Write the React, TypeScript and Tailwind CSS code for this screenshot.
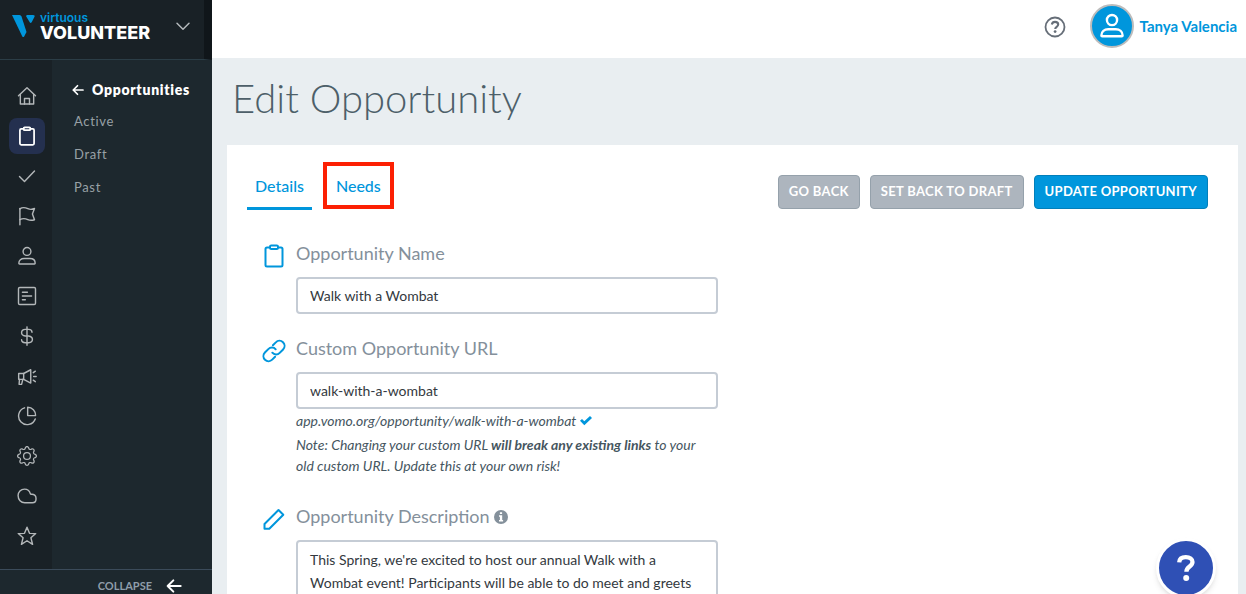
import type { ReactNode } from "react";
import { clsx } from "clsx";
import { BsGear } from "react-icons/bs";

type IconProps = { className?: string; children: ReactNode; width?: number };

function Icon({ className, children, width = 1.7 }: IconProps) {
  return (
    <svg
      viewBox="0 0 24 24"
      fill="none"
      stroke="currentColor"
      strokeWidth={width}
      strokeLinecap="round"
      strokeLinejoin="round"
      aria-hidden="true"
      className={clsx("shrink-0", className)}
    >
      {children}
    </svg>
  );
}

const home = (
  <>
    <path d="M1.8 11.8 12 2l10.200 9.800" />
    <path d="M4 10v11.500h16V10" />
    <path d="M9 21.500V15h6v6.500" />
  </>
);
const clipboard = (
  <>
    <path d="M8 3.500H5A1.500 1.500 0 0 0 3.500 5v16A1.500 1.500 0 0 0 5 22.500h14a1.500 1.500 0 0 0 1.500-1.500V5A1.500 1.500 0 0 0 19 3.500h-3" />
    <path d="M9.200 1.500h5.600a1.200 1.200 0 0 1 1.200 1.200v1.100a1.200 1.200 0 0 1-1.200 1.200H9.200A1.200 1.200 0 0 1 8 3.800V2.700a1.200 1.200 0 0 1 1.200-1.200Z" />
  </>
);
const check = <path d="m3 12.500 6 6L21 6" />;
const flag = (
  <>
    <path d="M3.500 22.500V3" />
    <path d="M3.500 3.500C7 .8 10.500 2 13 3.200s5 1.300 8-.2l-2.500 6.500L21 16.500c-3 1-5.500 1-8-.2s-6-1.800-9.500 0" />
  </>
);
const person = (
  <>
    <circle cx="12" cy="6.500" r="4.700" />
    <path d="M3 21.500h18c.5 0 .8-.3.8-.8 0-3.700-2.800-5.700-6.300-5.700h-7C5 15 2.200 17 2.200 20.700c0 .5.3.8.8.8Z" />
  </>
);
const article = (
  <>
    <rect x="1.800" y="1.800" width="20.400" height="20.400" rx="1.500" />
    <path d="M6.500 7.500h6M6.500 12h11M6.500 16.500h3.500" />
  </>
);
const dollar = (
  <>
    <path d="M12 1v22" />
    <path d="M18 7.500C18 5.300 16.300 4 14 4h-4C7.500 4 5.500 5.500 5.500 8s2 3.500 4.500 4h4c2.500.5 4.500 1.500 4.500 4S16.500 20 14 20h-4c-2.500 0-4.500-1.300-4.500-3.500" />
  </>
);
const megaphone = (
  <>
    <path d="M2 9h6v7H2Z" />
    <path d="m8 9 8.500-4.500v16L8 16" />
    <path d="m3 16-.5 6h3L7 16" />
    <path d="m19.500 8 2.500-1.800M20 12.500h3M19.500 17l2.500 1.800" />
  </>
);
const pie = (
  <>
    <path d="M9 2.200A10.300 10.300 0 1 0 21.900 15.500" />
    <path d="M12.800 1.500A9.500 9.500 0 0 1 22.300 11.500h-9.500Z" />
  </>
);
const cloud = (
  <path d="M16 9.200C15 5.700 12.300 3.700 9 3.700c-4.400 0-7.700 3.300-7.700 7.800 0 5 3.500 8.500 8 8.500h9.200c2.500 0 4.300-1.800 4.300-4.200v-1.300c0-3-2.500-4.800-5.300-4.600-.8.100-1.300-.1-1.500-.7Z" />
);
const star = <path d="m12 1.500 3 7.300 7.500.3-5.800 5 2 7.900L12 17.700 5.300 22l2-7.900-5.800-5 7.500-.3Z" />;
const backArrow = <path d="M22 12H2.500M11 3.500 2.500 12l8.500 8.500" />;
const link = (
  <>
    <path d="M10.300 13.700a5 5 0 0 0 7.400.2l3.400-3.400a5 5 0 0 0-7.300-7.100l-2.900 2.800" />
    <path d="M13.700 10.300a5 5 0 0 0-7.400-.2l-3.400 3.400a5 5 0 0 0 7.300 7.100l2.900-2.800" />
  </>
);
const pencil = <path d="M2.500 17 16.500 3l4.800 4.800L7.300 21.800H2.500Z" />;

const navItems = [
  { label: "Home", icon: home },
  { label: "Opportunities", icon: clipboard, active: true },
  { label: "Approvals", icon: check },
  { label: "Campaigns", icon: flag },
  { label: "People", icon: person },
  { label: "Forms", icon: article },
  { label: "Giving", icon: dollar },
  { label: "Announcements", icon: megaphone },
  { label: "Reports", icon: pie },
  { label: "Settings", icon: null },
  { label: "Cloud", icon: cloud },
  { label: "Favorites", icon: star },
];

function Sidebar() {
  return (
    <aside className="flex w-[212px] shrink-0 flex-col bg-[#1d282e]">
      <div className="flex h-[60px] shrink-0 items-start border-b border-[#2b3d46] border-r-8 border-r-[#10161a] bg-[#192126] pl-3">
        <svg viewBox="0 0 24 24" className="mt-[14px] h-6 w-6 shrink-0" aria-hidden="true">
          <path d="M0 1h7.500q1.500 0 2 1.500L14.500 18l-2.200 4.200q-1 1.600-2 .2Z" fill="#0096dc" />
          <path d="M15 1h6q2.400 0 1.400 2l-2.600 5q-1.500 2-2.500-.5L14.200 2.500Q14 1 15 1Z" fill="#0096dc" />
        </svg>
        <div className="ml-1 mt-[11px] flex flex-col font-['Inter',sans-serif]">
          <span className="text-[12px] font-semibold leading-[13px] text-[#0096dc]">virtuous</span>
          <span className="text-[18px] font-extrabold leading-[17px] text-white">VOLUNTEER</span>
        </div>
        <button type="button" aria-label="Switch product" className="ml-auto mt-[18px] mr-[13px] text-[#b5babd]">
          <Icon className="h-4 w-4" width={2.2}>
            <path d="m3 8 9 9 9-9" />
          </Icon>
        </button>
      </div>

      <div className="flex min-h-0 flex-1 overflow-hidden">
        <nav aria-label="Main" className="flex w-[52px] shrink-0 flex-col items-center gap-1 bg-[#192126] pt-[18px]">
          {navItems.map((item) => (
            <a
              key={item.label}
              href="#"
              aria-label={item.label}
              className={clsx(
                "flex h-9 w-9 shrink-0 items-center justify-center rounded-lg ml-[2px]",
                item.active ? "bg-[#24304f] text-white" : "text-[#b3b7b9]",
              )}
            >
              {item.icon ? (
                <Icon className="h-5 w-5" width={item.active ? 2.1 : 1.7}>
                  {item.icon}
                </Icon>
              ) : (
                <BsGear className="h-5 w-5" aria-hidden="true" />
              )}
            </a>
          ))}
        </nav>
        <nav aria-label="Opportunities" className="flex flex-1 flex-col pl-5 pt-[19px]">
          <a href="#" className="flex h-5 items-center gap-2 text-[14px] font-extrabold tracking-wider text-white">
            <Icon className="mt-[2px] h-3 w-3" width={3.4}>
              {backArrow}
            </Icon>
            Opportunities
          </a>
          <ul className="mt-3 flex flex-col gap-[13px] pl-[2px] text-[13px] leading-5 tracking-wider text-[#98a1a6]">
            {["Active", "Draft", "Past"].map((name) => (
              <li key={name}>
                <a href="#">{name}</a>
              </li>
            ))}
          </ul>
        </nav>
      </div>

      <button
        type="button"
        className="flex shrink-0 items-center justify-end gap-[14px] border-t border-[#3b4b5a] pr-[30px] pt-2 text-[11px] font-bold leading-4 text-[#8f9daa]"
      >
        COLLAPSE
        <Icon className="h-4 w-4 text-white" width={3}>
          {backArrow}
        </Icon>
      </button>
    </aside>
  );
}

function TopBar() {
  return (
    <header className="flex h-[58px] shrink-0 items-start justify-end bg-white pr-[9px] pt-1">
      <button type="button" aria-label="Help" className="mt-3 mr-6 text-[#666e78]">
        <svg viewBox="0 0 22 22" className="h-[22px] w-[22px]" fill="none" stroke="currentColor" aria-hidden="true">
          <circle cx="11" cy="11" r="9.500" strokeWidth="1.800" />
          <path d="M7.800 8.500C8.200 6.700 9.400 5.900 11 5.900c1.900 0 3.200 1.100 3.200 2.700 0 2.200-3 2.300-3 4.300" strokeWidth="2.100" />
          <circle cx="11.100" cy="15.600" r="1.400" fill="currentColor" stroke="none" />
        </svg>
      </button>
      <a href="#" className="flex items-center gap-[6px] text-[15px] font-bold text-[#0096dc]">
        <span className="flex h-11 w-11 items-center justify-center rounded-full border-2 border-[#bcbcbc] bg-[#0096dc] text-white">
          <Icon className="h-[26px] w-[26px]" width={2.2}>
            {person}
          </Icon>
        </span>
        Tanya Valencia
      </a>
    </header>
  );
}

const buttonBase = "h-[34px] rounded border px-[10px] text-[13px] font-bold tracking-wide";
const inputBase = "w-full rounded border-2 border-[#c5ccd5] bg-white px-3 text-[14px] text-[#333940] outline-none";

type FieldProps = { id: string; label: ReactNode; icon: ReactNode; children: ReactNode };

function Field({ id, label, icon, children }: FieldProps) {
  return (
    <div className="flex gap-[10px]">
      <Icon className="mt-[3px] h-6 w-6 text-[#0096dc]" width={2}>
        {icon}
      </Icon>
      <div className="w-full max-w-[422px]">
        <label htmlFor={id} className="mb-3 flex h-6 items-center gap-1 text-[18px] text-[#84909b]">
          {label}
        </label>
        {children}
      </div>
    </div>
  );
}

export default function App() {
  return (
    <div className="relative flex h-screen overflow-hidden bg-[#e9eef1] font-['Lato',sans-serif]">
      <Sidebar />
      <div className="flex min-w-0 flex-1 flex-col">
        <TopBar />
        <main className="flex-1 overflow-y-auto pl-[15px] pr-2 [scrollbar-width:none]">
          <h1 className="pb-[17px] pl-[5px] pt-[15px] text-[40px] font-light leading-[50px] text-[#4d5f69]">
            Edit Opportunity
          </h1>
          <section className="mt-[5px] bg-white pb-10">
            <div className="flex items-start justify-between pl-5 pr-[30px] pt-[17px]">
              <nav aria-label="Sections" className="flex gap-[11px] text-[16px] font-medium text-[#0096dc]">
                <a href="#details" className="flex h-12 items-center border-b-3 px-2 pt-[3px] border-[#0096dc]">
                  Details
                </a>
                <a href="#needs" className="flex h-[47px] items-center border-4 border-[#fc2003] px-[9px]">
                  Needs
                </a>
              </nav>
              <div className="flex gap-[10px] pt-[13px]">
                <button type="button" className={clsx(buttonBase, "border-[#95a1ab] bg-[#adb5be] text-white")}>
                  GO BACK
                </button>
                <button type="button" className={clsx(buttonBase, "border-[#95a1ab] bg-[#adb5be] text-white")}>
                  SET BACK TO DRAFT
                </button>
                <button type="submit" form="opportunity" className={clsx(buttonBase, "border-[#027fba] bg-[#0096dc] text-white")}>
                  UPDATE OPPORTUNITY
                </button>
              </div>
            </div>

            <form id="opportunity" className="flex flex-col pl-[35px] pr-[30px] pt-[31px]">
              <Field id="name" label="Opportunity Name" icon={clipboard}>
                <input id="name" defaultValue="Walk with a Wombat" className={clsx(inputBase, "h-[37px]")} />
              </Field>
              <div className="h-[22px]" />
              <Field id="url" label="Custom Opportunity URL" icon={link}>
                <input id="url" defaultValue="walk-with-a-wombat" className={clsx(inputBase, "h-[37px]")} />
                <div className="pr-2 pt-[1px] text-[14px] italic leading-[21px] text-[#46565f]">
                  <p className="flex items-center gap-[3px]">
                    app.vomo.org/opportunity/walk-with-a-wombat
                    <svg viewBox="0 0 14 12" className="h-3 w-[14px]" aria-hidden="true">
                      <path d="M1 5.800 3 3.900l2.300 2.300L11 .9l2 2L5.300 10.300Z" fill="#0096dc" />
                    </svg>
                  </p>
                  <p className="mt-[3px]">
                    Note: Changing your custom URL <strong className="font-bold">will break any existing links</strong> to
                    your old custom URL. Update this at your own risk!
                  </p>
                </div>
              </Field>
              <div className="h-7" />
              <Field
                id="description"
                icon={pencil}
                label={
                  <>
                    Opportunity Description
                    <svg viewBox="0 0 14 14" className="mt-[1px] h-[14px] w-[14px]" aria-hidden="true">
                      <circle cx="7" cy="7" r="7" fill="#84909b" />
                      <path d="M5.900 2.200h2.200v1.900H5.900ZM5 5.200h3.200v4.700H9.100v1.500H5V9.900h.9V6.700H5Z" fill="#fff" />
                    </svg>
                  </>
                }
              >
                <textarea
                  id="description"
                  rows={6}
                  defaultValue="This Spring, we're excited to host our annual Walk with a Wombat event! Participants will be able to do meet and greets"
                  className={clsx(inputBase, "block resize-none py-[6px] leading-[23px]")}
                />
              </Field>
            </form>
          </section>
        </main>
      </div>

      <button
        type="button"
        aria-label="Open support"
        className="absolute -bottom-1 right-[30px] flex h-[60px] w-[60px] items-center justify-center rounded-full border-3 border-white bg-[#2f50b5] text-white shadow-md"
      >
        <svg viewBox="0 0 20 28" className="h-7 w-5" fill="none" aria-hidden="true">
          <path d="M3.200 8.400C3.400 4.700 6 3.100 9.800 3.100c4 0 6.700 1.800 6.700 5 0 4.500-6.100 4.400-6.100 9.600" stroke="#fff" strokeWidth="4.300" />
          <circle cx="10.200" cy="24" r="3" fill="#fff" />
        </svg>
      </button>
    </div>
  );
}
